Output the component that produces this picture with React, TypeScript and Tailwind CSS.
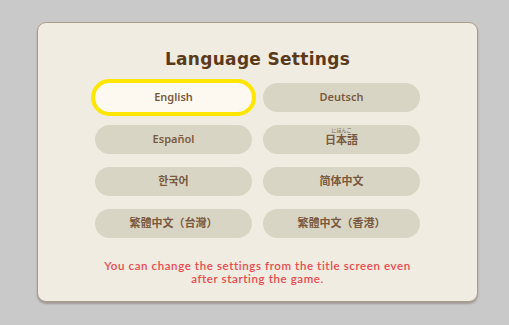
const LANGS: { label: string; ruby?: string }[] = [
  { label: "English" },
  { label: "Deutsch" },
  { label: "Español" },
  { label: "日本語", ruby: "にほんご" },
  { label: "한국어" },
  { label: "简体中文" },
  { label: "繁體中文（台灣）" },
  { label: "繁體中文（香港）" },
];

export default function App() {
  const selected = "English";
  return (
    <div className="h-[325px] w-[509px] bg-[#c9c9c9] pl-[37px] pt-[22px]">
      <div
        className="flex h-[280px] w-[441px] flex-col items-center rounded-[9px] border border-[#a99c8c] bg-[#f0ece1] shadow-[0_2px_2px_rgba(90,70,50,0.35)]"
        style={{ fontFamily: '"Noto Sans", "Noto Sans CJK JP", sans-serif' }}
      >
        <h1
          className="mt-[25px] text-[17px] font-bold leading-[22px] tracking-[0.3px] text-[#5b3a1b]"
          style={{ fontFamily: '"DejaVu Sans", sans-serif' }}
        >
          Language Settings
        </h1>
        <div className="mt-[13px] grid grid-cols-[157px_157px] gap-x-[11px] gap-y-[13px]">
          {LANGS.map((l) => (
            <button
              key={l.label}
              type="button"
              className={`flex h-[29px] items-center justify-center rounded-full text-[11px] font-semibold text-[#7a5a3e] ${
                l.label === selected
                  ? "bg-[#fdf9f1] outline-4 outline-[#ffe600]"
                  : "bg-[#d9d5c5]"
              }`}
            >
              {l.ruby ? (
                <span className="flex flex-col items-center">
                  <span className="mt-[-6px] mb-[1px] text-[5px] font-normal leading-[5px]">
                    {l.ruby}
                  </span>
                  <span className="leading-[12px]">{l.label}</span>
                </span>
              ) : (
                l.label
              )}
            </button>
          ))}
        </div>
        <p
          className="mt-[21px] text-center text-[11.5px] font-semibold leading-[13px] tracking-[0.6px] text-[#ec4a4f]"
          style={{ fontFamily: "Lato, sans-serif" }}
        >
          You can change the settings from the title screen even
          <br />
          after starting the game.
        </p>
      </div>
    </div>
  );
}
